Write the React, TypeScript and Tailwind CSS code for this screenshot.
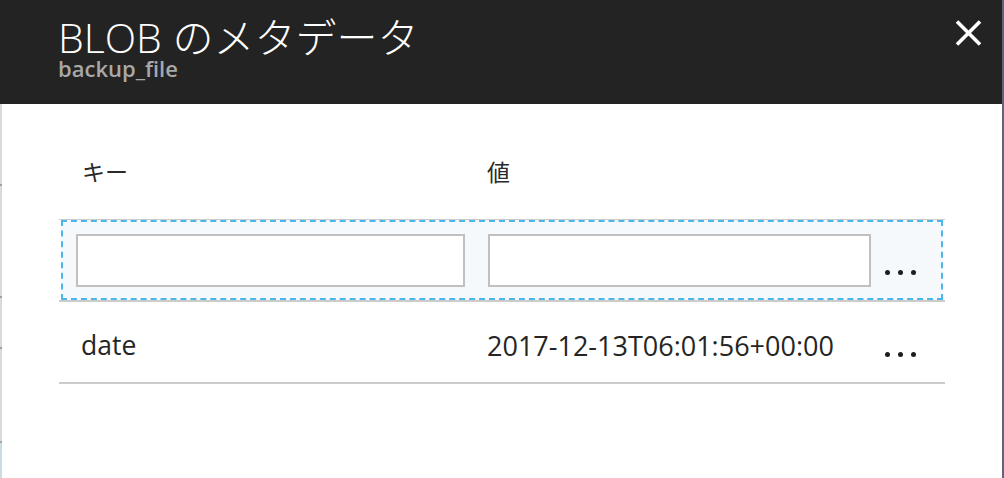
import React from 'react'

const font = { fontFamily: '"Open Sans", "Noto Sans CJK JP", sans-serif' }

function Dots() {
  return (
    <div className="flex items-center gap-[8px] mt-[24px]">
      <span className="block w-[5px] h-[5px] rounded-full bg-[#1e1e1e]" />
      <span className="block w-[5px] h-[5px] rounded-full bg-[#1e1e1e]" />
      <span className="block w-[5px] h-[5px] rounded-full bg-[#1e1e1e]" />
    </div>
  )
}

function LeftEdge() {
  return (
    <div className="w-[2px] flex flex-col shrink-0">
      <div className="h-[80px] bg-[#dadada]" />
      <div className="h-[2px] bg-[#9e9e9e]" />
      <div className="h-[110px] bg-[#dadada]" />
      <div className="h-[2px] bg-[#9e9e9e]" />
      <div className="h-[49px] bg-[#dadada]" />
      <div className="h-[2px] bg-[#9e9e9e]" />
      <div className="h-[92px] bg-[#dadada]" />
      <div className="h-[2px] bg-[#a9a9a9]" />
      <div className="flex-1 bg-[#c8dce1]" />
    </div>
  )
}

export default function App() {
  return (
    <div className="flex w-[1004px] h-[478px] bg-white overflow-hidden" style={font}>
      <div className="flex flex-col flex-1">
        <header className="h-[104px] bg-[#232323] flex justify-between shrink-0">
          <div className="pl-[58px] pt-[17px]">
            <div className="text-[41px] leading-[40px] font-light text-white whitespace-nowrap">
              BLOB のメタデータ
            </div>
            <div className="text-[22px] leading-[22px] font-semibold text-[#a8a8a8]">
              backup_file
            </div>
          </div>
          <button className="mt-[20px] mr-[20px] w-[27px] h-[26px]" aria-label="close">
            <svg width="27" height="26" viewBox="0 0 27 26">
              <path d="M2 1.5 L25 24.5 M25 1.5 L2 24.5" stroke="#fff" strokeWidth="3.6" />
            </svg>
          </button>
        </header>
        <div className="flex flex-1">
          <LeftEdge />
          <div className="flex-1">
            <div className="ml-[57px] w-[886px]">
              <div className="mt-[48px] h-[40px] mb-[27px] flex items-center text-[23px] text-[#2a2a2a]">
                <div className="w-[428px] pl-[23px]">キー</div>
                <div>値</div>
              </div>
              <div className="border-t border-b-2 border-[#cccccc]">
                <div className="mx-[2px] h-[80px] border-2 border-dashed border-[#4cb6ea] bg-[#f5f9fc] flex items-center">
                  <input className="ml-[13px] w-[389px] h-[53px] border-2 border-[#c0c0c0] bg-white outline-none" />
                  <input className="ml-[23px] w-[383px] h-[53px] border-2 border-[#c0c0c0] bg-white outline-none" />
                  <div className="ml-[14px]">
                    <Dots />
                  </div>
                </div>
              </div>
              <div className="h-[82px] border-b-2 border-[#cccccc] flex items-center text-[26.5px] text-[#252525]">
                <div className="w-[428px] pl-[22px] mt-[8px]">date</div>
                <div className="w-[398px] mt-[8px] text-[27px]">2017-12-13T06:01:56+00:00</div>
                <Dots />
              </div>
            </div>
          </div>
        </div>
      </div>
      <div className="w-[2px] bg-[#62627c] shrink-0" />
    </div>
  )
}
